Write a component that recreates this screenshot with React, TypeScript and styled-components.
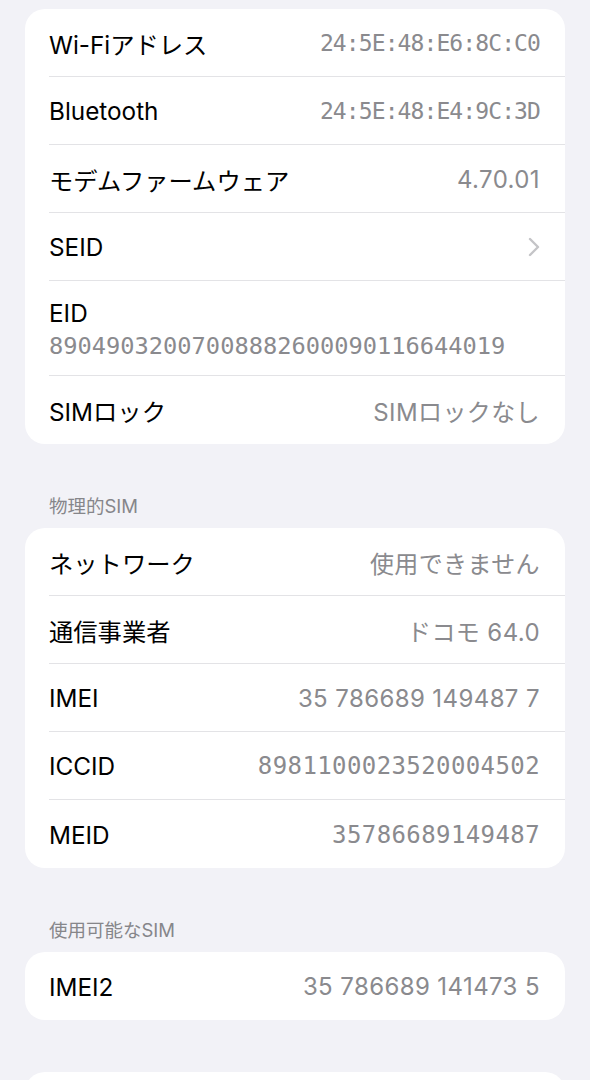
import * as React from "react";
import styled, { createGlobalStyle } from "styled-components";

const GlobalStyle = createGlobalStyle`
  html, body {
    margin: 0;
    padding: 0;
    background: #f2f2f7;
  }
  body {
    font-family: Inter, "Noto Sans CJK JP", sans-serif;
    -webkit-font-smoothing: antialiased;
  }
`;

const Page = styled.div`
  display: flex;
  flex-direction: column;
  padding: 9px 25px 0 25px;
  height: 1080px;
  overflow: hidden;
  box-sizing: border-box;
`;

const Card = styled.div<{ $filler?: boolean }>`
  background: #ffffff;
  border-radius: 20px;
  overflow: hidden;
  flex-shrink: 0;
  min-height: ${(p) => (p.$filler ? "100px" : "0")};
`;

const SectionHeader = styled.div<{ $gap?: number }>`
  color: #86868a;
  font-size: 18.5px;
  padding: ${(p) => p.$gap ?? 51}px 24px 11px 24px;
  line-height: 22px;
  min-height: 22px;
`;

const Row = styled.div`
  display: flex;
  padding-left: 24px;
`;

const RowInner = styled.div<{ $last?: boolean; $stacked?: boolean }>`
  flex: 1;
  display: flex;
  box-sizing: border-box;
  flex-direction: ${(p) => (p.$stacked ? "column" : "row")};
  align-items: ${(p) => (p.$stacked ? "flex-start" : "center")};
  justify-content: ${(p) => (p.$stacked ? "center" : "space-between")};
  min-height: ${(p) => (p.$stacked ? "95px" : "68px")};
  padding-right: 25px;
  padding-top: 1px;
  border-bottom: ${(p) => (p.$last ? "none" : "1px solid #e3e3e6")};
  gap: ${(p) => (p.$stacked ? "4px" : "0")};
`;

const Label = styled.span`
  color: #000000;
  font-size: 24.3px;
  white-space: nowrap;
`;

const Value = styled.span`
  color: #8a8a8e;
  font-size: 24px;
  font-family: Inter, "Noto Sans CJK JP", sans-serif;
  letter-spacing: 0.4px;
  white-space: nowrap;
`;

const MonoValue = styled(Value)<{ $wide?: boolean }>`
  font-family: "DejaVu Sans Mono", monospace;
  font-size: ${(p) => (p.$wide ? "24px" : "23.7px")};
  letter-spacing: ${(p) => (p.$wide ? "0.4px" : "0")};
`;

const AddressValue = styled(Value)`
  font-family: "DejaVu Sans Mono", monospace;
  font-size: 23px;
  letter-spacing: -0.9px;
`;

const Chevron = () => (
  <svg width="12" height="20" viewBox="0 0 12 20">
    <path
      d="M2 2 L10 10 L2 18"
      fill="none"
      stroke="#c4c4c7"
      strokeWidth="2.4"
      strokeLinecap="round"
      strokeLinejoin="round"
    />
  </svg>
);

type Item = {
  label: string;
  value?: string;
  kind?: "mono" | "wide" | "address";
  chevron?: boolean;
  stacked?: boolean;
};

const topItems: Item[] = [
  { label: "Wi-Fiアドレス", value: "24:5E:48:E6:8C:C0", kind: "address" },
  { label: "Bluetooth", value: "24:5E:48:E4:9C:3D", kind: "address" },
  { label: "モデムファームウェア", value: "4.70.01" },
  { label: "SEID", chevron: true },
  { label: "EID", value: "89049032007008882600090116644019", kind: "mono", stacked: true },
  { label: "SIMロック", value: "SIMロックなし" },
];

const physicalItems: Item[] = [
  { label: "ネットワーク", value: "使用できません" },
  { label: "通信事業者", value: "ドコモ 64.0" },
  { label: "IMEI", value: "35 786689 149487 7" },
  { label: "ICCID", value: "8981100023520004502", kind: "wide" },
  { label: "MEID", value: "35786689149487", kind: "wide" },
];

const availableItems: Item[] = [{ label: "IMEI2", value: "35 786689 141473 5" }];

const renderValue = (item: Item) => {
  if (item.chevron) return <Chevron />;
  if (!item.value) return null;
  if (item.kind === "address") return <AddressValue>{item.value}</AddressValue>;
  if (item.kind === "mono") return <MonoValue>{item.value}</MonoValue>;
  if (item.kind === "wide") return <MonoValue $wide>{item.value}</MonoValue>;
  return <Value>{item.value}</Value>;
};

const renderItems = (items: Item[]) =>
  items.map((item, i) => (
    <Row key={item.label}>
      <RowInner $last={i === items.length - 1} $stacked={item.stacked}>
        <Label>{item.label}</Label>
        {renderValue(item)}
      </RowInner>
    </Row>
  ));

export default function App() {
  return (
    <>
      <GlobalStyle />
      <Page>
        <Card>{renderItems(topItems)}</Card>
        <SectionHeader>物理的SIM</SectionHeader>
        <Card>{renderItems(physicalItems)}</Card>
        <SectionHeader>使用可能なSIM</SectionHeader>
        <Card>{renderItems(availableItems)}</Card>
        <SectionHeader $gap={19} />
        <Card $filler />
      </Page>
    </>
  );
}
